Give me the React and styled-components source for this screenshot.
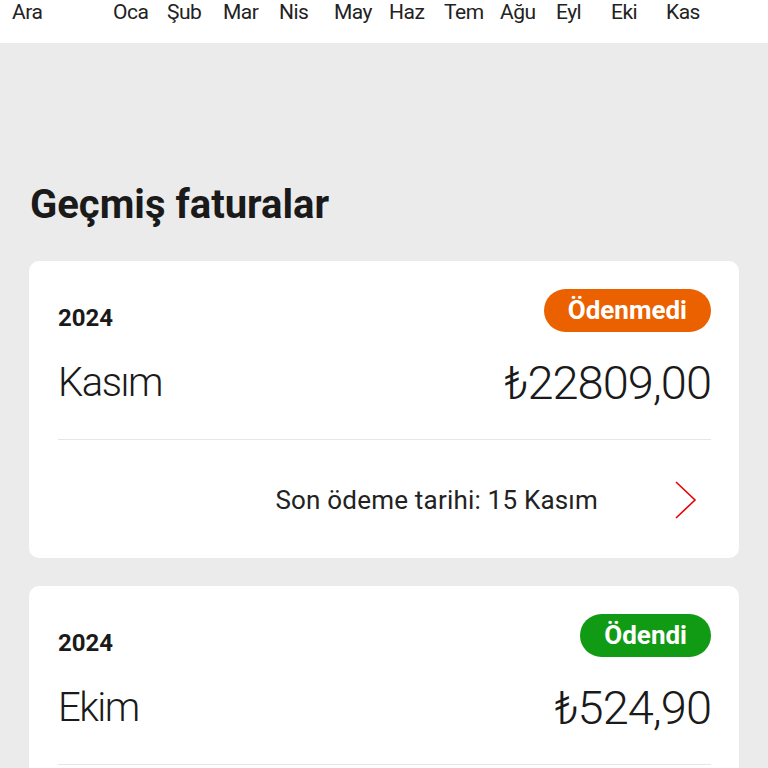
import React from 'react';
import styled, { createGlobalStyle } from 'styled-components';

const GlobalStyle = createGlobalStyle`
  html, body {
    margin: 0;
    padding: 0;
    background: #ebebeb;
    font-family: Roboto, "Liberation Sans", sans-serif;
    color: #1a1a1a;
  }
`;

const TopBar = styled.div`
  height: 43px;
  background: #ffffff;
  display: flex;
  align-items: flex-start;
  padding-left: 12px;
  box-sizing: border-box;
`;

const Month = styled.span`
  width: ${p => p.w || 55.5}px;
  flex: none;
  font-size: 21px;
  line-height: 24px;
  color: #222;
  letter-spacing: -0.5px;
`;

const Page = styled.main`
  padding: 140px 29px 0 29px;
`;

const Title = styled.h1`
  margin: 0 0 34px 1px;
  font-size: 40px;
  line-height: 44px;
  font-weight: 700;
  color: #1a1a1a;
`;

const List = styled.div`
  display: flex;
  flex-direction: column;
  gap: 28px;
`;

const Card = styled.section`
  background: #ffffff;
  border-radius: 10px;
  padding: 28px 28px 0 29px;
`;

const HeadRow = styled.div`
  display: flex;
  align-items: center;
  justify-content: space-between;
  height: 43px;
`;

const Year = styled.span`
  font-size: 24px;
  font-weight: 700;
  padding-top: 14px;
`;

const Badge = styled.span`
  background: ${p => (p.paid ? '#119a14' : '#eb6100')};
  color: #fff;
  font-weight: 700;
  font-size: 26px;
  height: 43px;
  line-height: 43px;
  padding: 0 24px;
  border-radius: 22px;
`;

const AmountRow = styled.div`
  display: flex;
  align-items: center;
  justify-content: space-between;
  height: 64px;
  padding-top: 18px;
  padding-bottom: 25px;
  border-bottom: 1px solid #e6e6e6;
`;

const MonthName = styled.span`
  font-size: 40px;
  font-weight: 300;
  letter-spacing: -1.5px;
`;

const Amount = styled.span`
  font-size: 47px;
  font-weight: 300;
  letter-spacing: -1px;
`;

const Footer = styled.div`
  display: flex;
  align-items: center;
  justify-content: flex-end;
  box-sizing: border-box;
  height: 118px;
  padding: 2px 13px 0 0;
  gap: 76px;
`;

const DueText = styled.span`
  font-size: 26px;
  color: #222;
  letter-spacing: 0.2px;
`;

const Chevron = () => (
  <svg width="24" height="40" viewBox="0 0 24 40">
    <path d="M2 2 L21 20 L2 38" fill="none" stroke="#e60000" strokeWidth="1.6" />
  </svg>
);

const months = [
  ['Ara', 101], ['Oca', 54], ['Şub', 56], ['Mar', 56], ['Nis', 55], ['May', 55],
  ['Haz', 55], ['Tem', 56], ['Ağu', 56], ['Eyl', 55], ['Eki', 55], ['Kas', 55],
];

const bills = [
  { year: '2024', month: 'Kasım', amount: '₺22809,00', paid: false, due: 'Son ödeme tarihi: 15 Kasım' },
  { year: '2024', month: 'Ekim', amount: '₺524,90', paid: true, due: 'Son ödeme tarihi: 15 Ekim' },
];

export default function App() {
  return (
    <>
      <GlobalStyle />
      <TopBar>
        {months.map(([m, w]) => (
          <Month key={m} w={w}>{m}</Month>
        ))}
      </TopBar>
      <Page>
        <Title>Geçmiş faturalar</Title>
        <List>
          {bills.map(b => (
            <Card key={b.month}>
              <HeadRow>
                <Year>{b.year}</Year>
                <Badge paid={b.paid}>{b.paid ? 'Ödendi' : 'Ödenmedi'}</Badge>
              </HeadRow>
              <AmountRow>
                <MonthName>{b.month}</MonthName>
                <Amount>{b.amount}</Amount>
              </AmountRow>
              <Footer>
                <DueText>{b.due}</DueText>
                <Chevron />
              </Footer>
            </Card>
          ))}
        </List>
      </Page>
    </>
  );
}
